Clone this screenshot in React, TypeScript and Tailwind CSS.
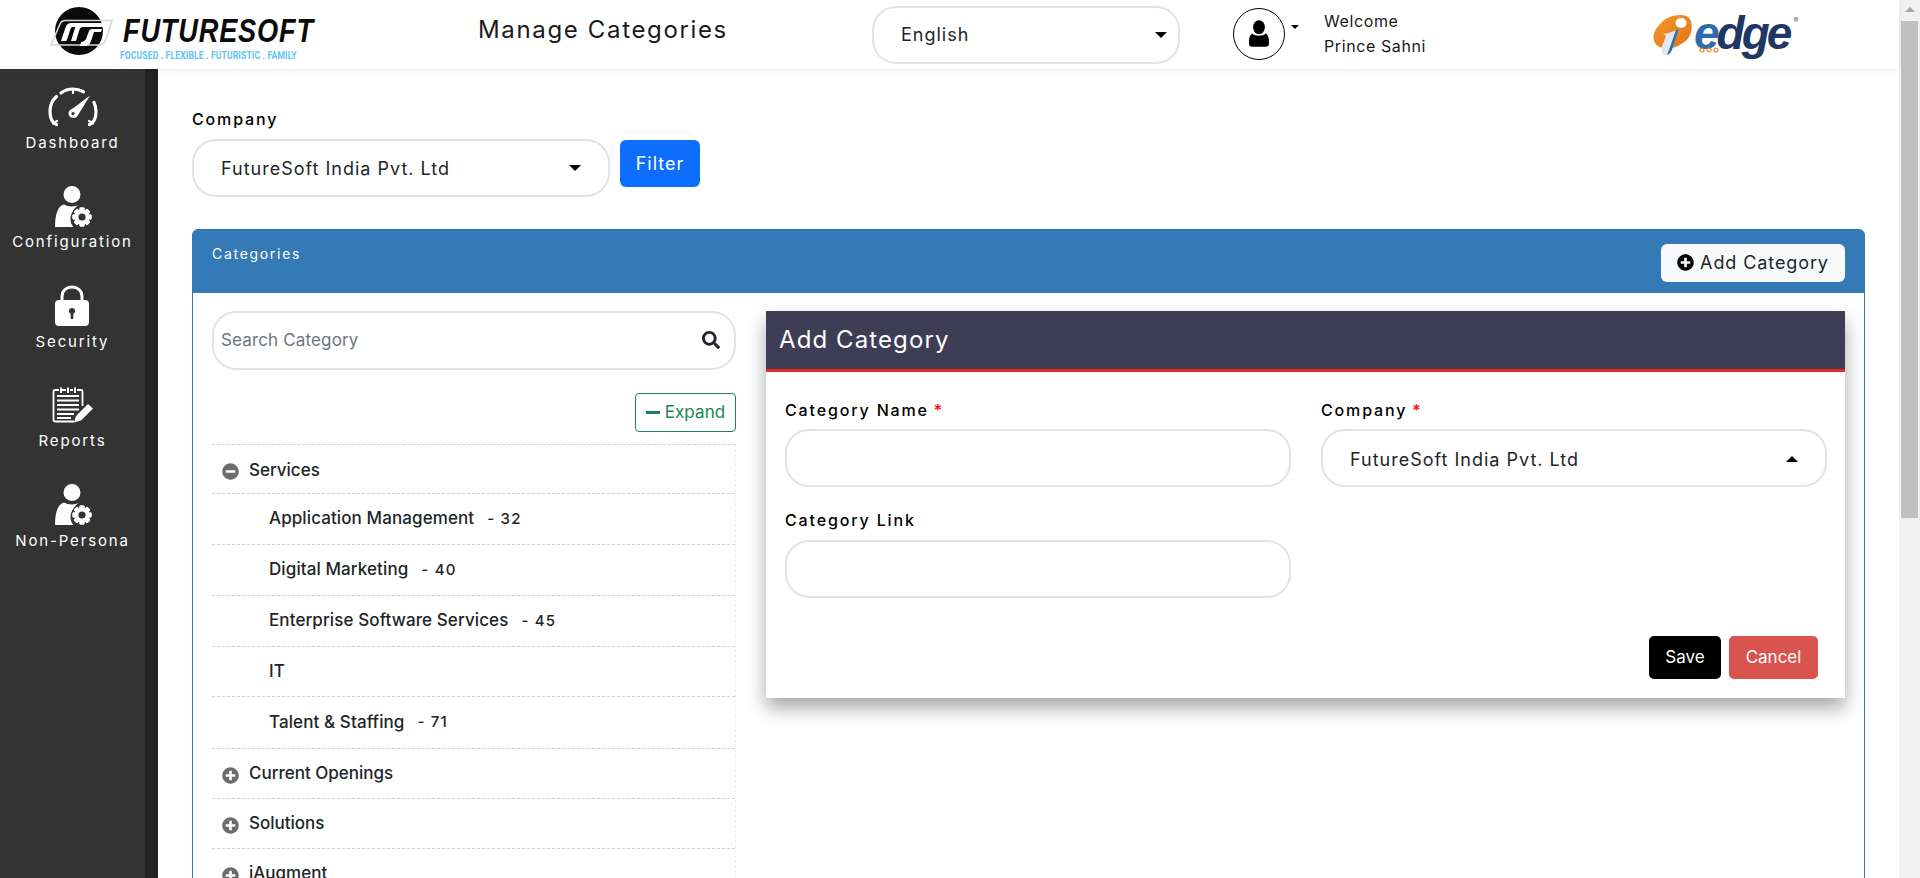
import React from "react";
import { FaPlusCircle, FaMinusCircle, FaSearch } from "react-icons/fa";

const Gauge = () => (
  <svg viewBox="0 0 50 40" className="w-[50px] h-[40px]" fill="none" stroke="#fff" strokeWidth="3.200" strokeLinecap="round">
    <path d="M8.500 37.500 C4 35.500 2 30 2 24.500 C2 18.500 4.500 13 8.500 9.500" />
    <path d="M41.500 37.500 C46 35.500 48 30 48 24.500 C48 21 47.300 18 46 15.500" />
    <path d="M13 6 C16.500 3.200 20.500 2 25 2 C29 2 32.500 3 35.500 4.800" />
    <path d="M25 2 V6" strokeWidth="2.200" />
    <path d="M5 36.500 L9 34" strokeWidth="2.200" />
    <path d="M45 36.500 L41 34" strokeWidth="2.200" />
    <path d="M42 8.500 L29.500 29 C27 32.500 20.500 31 20.500 26.500 C20.500 23.500 23.500 22 25.500 21 Z" fill="#fff" stroke="none" />
    <circle cx="25" cy="26.500" r="1.600" fill="#333" stroke="none" />
  </svg>
);

const Lock = () => (
  <svg viewBox="0 0 34 41" className="w-[34px] h-[41px]">
    <path d="M7 18 V11.500 C7 5.500 11.500 2 17 2 C22.500 2 27 5.500 27 11.500 V18" fill="none" stroke="#fff" strokeWidth="3" />
    <rect x="0" y="15" width="34" height="26" rx="4" fill="#fff" />
    <circle cx="17" cy="26" r="3" fill="#333" />
    <rect x="15.700" y="27" width="2.600" height="7" fill="#333" />
  </svg>
);

const ReportIcon = () => (
  <svg viewBox="0 0 42 37" className="w-[42px] h-[37px]" fill="none" stroke="#fff" strokeWidth="1.800">
    <path d="M7 3 H3 a1.500 1.500 0 0 0 -1.500 1.500 V33 a1.500 1.500 0 0 0 1.500 1.500 H22" />
    <path d="M25 3 H29 a1.500 1.500 0 0 1 1.500 1.500 V19" />
    <path d="M9 0.500 V6 M16 0.500 V6 M23 0.500 V6" strokeWidth="2" />
    <path d="M10 3 H14 M18 3 H21" />
    <path d="M5 9 H27 M5 13.500 H27 M5 18 H27 M5 22.500 H27 M5 27 H22 M5 31 H19" strokeWidth="2.200" />
    <path d="M22 35.500 L24 29 L36 17 L41 21.500 L29 33.500 Z" fill="#fff" stroke="none" />
  </svg>
);

const PersonGear = () => {
  const teeth = [0, 45, 90, 135, 180, 225, 270, 315];
  return (
    <svg viewBox="0 0 38 41" className="w-[38px] h-[41px] ml-[2px]">
      <circle cx="17" cy="8.500" r="8.500" fill="#fff" />
      <path d="M0 41 C0 28 3 20 9 18.500 C13 21 20 21 24 18.800 C19 22 15.500 28 15.500 33 C15.500 36 16.500 39 18.500 41 Z" fill="#fff" />
      <g fill="#fff">
        {teeth.map((a) => (
          <rect key={a} x="24.500" y="21.500" width="5" height="19" rx="1" transform={`rotate(${a} 27 31)`} />
        ))}
      </g>
      <circle cx="27" cy="31" r="7.500" fill="#fff" />
      <circle cx="27" cy="31" r="3.600" fill="#333" />
    </svg>
  );
};

const AvatarIcon = () => (
  <svg viewBox="0 0 24 32" className="w-[20px] h-[31px]" fill="#000">
    <ellipse cx="12" cy="8.500" rx="7" ry="8.500" />
    <path d="M4 16 C0.500 18 0 22 0 28 C0 30.500 1.500 32 4 32 H20 C22.500 32 24 30.500 24 28 C24 22 23.500 18 20 16 C17 19.500 7 19.500 4 16 Z" />
  </svg>
);

const FutureLogo = () => (
  <div className="flex flex-col w-[266px] -mt-[1px]">
    <div className="flex items-center h-[50px]">
      <svg viewBox="0 0 70 50" className="w-[70px] h-[50px] shrink-0">
        <circle cx="29" cy="25" r="24" fill="#0b0b0b" />
        <path d="M1 39 L10 18 C11 15.500 13 14.500 15.500 14.500 H62 L56 33 C55 37 52 39 48 39 Z" fill="none" stroke="#d8d8d8" strokeWidth="1.600" />
        <path d="M11 35 L16 20 C17 18 19 17 21 17 H55 L53.500 21 H33 C31 21 30 22 29.500 23.500 L26 35 H21 L25 22 C25.500 21 25 21 24 21 H23 C21.500 21 21 21.500 20.500 23 L16.500 35 Z" fill="#fff" />
        <path d="M31 36 C33 36 35 35 36 33 L39 25 C39.500 24 40.500 23 42 23 H52 L51 26 H44 L41 35 C40 38 38 40 34 40 H30 Z" fill="#fff" />
      </svg>
      <span className="ml-[3px] inline-block origin-left scale-x-[0.8] text-[34px] leading-none font-black italic text-[#0b0b0b] tracking-[1px] font-['Liberation_Sans',sans-serif] whitespace-nowrap -mt-[2px]">FUTURESOFT</span>
    </div>
    <div className="pl-[70px] -mt-[6px] origin-[70px_50%] scale-x-[0.85] text-[10px] leading-[12px] font-bold text-[#5cc4f5] tracking-[0.2px] whitespace-nowrap font-['Roboto',sans-serif]">FOCUSED . FLEXIBLE . FUTURISTIC . FAMILY</div>
  </div>
);

const EdgeLogo = () => (
  <div className="flex items-center h-[46px] w-[140px]">
    <svg viewBox="0 0 40 42" className="w-[40px] h-[42px] shrink-0">
      <defs>
        <linearGradient id="org" x1="0" y1="0" x2="1" y2="1">
          <stop offset="0" stopColor="#f29a2e" />
          <stop offset="1" stopColor="#e8710f" />
        </linearGradient>
      </defs>
      <path d="M9 8 C15 1 33 -2 37 5 C41 13 38 24 30 29 C25 32 22 34 16 34 C8 35 1 32 0.500 24 C0 18 4 13 9 8 Z" fill="url(#org)" />
      <ellipse cx="28" cy="9" rx="5.500" ry="5" fill="#fff" />
      <path d="M10 20 C14 20 21 17 26 15 L20 33 C18 39 14 42 11 41 C8 40 8 36 9 32 L13 22 Z" fill="#e4e7ee" />
      <path d="M14 41 C17 40 19 37 20 33 L26 15 L23 16 L16 36 Z" fill="#2d6cb5" />
    </svg>
    <div className="relative ml-[1px] -mt-[4px] flex text-[46px] leading-none font-bold italic tracking-[-3px] font-['Liberation_Sans',sans-serif]">
      <span className="text-[#2f6cae]">e</span>
      <span className="text-[#1f3763]">dge</span>
      <svg viewBox="0 0 20 6" className="absolute left-[5px] top-[37px] w-[20px] h-[6px]">
        <circle cx="3" cy="3" r="2" fill="none" stroke="#ef7f1a" strokeWidth="1.200" />
        <circle cx="10" cy="3" r="2" fill="none" stroke="#ef7f1a" strokeWidth="1.200" />
        <circle cx="17" cy="3" r="2" fill="none" stroke="#ef7f1a" strokeWidth="1.200" />
      </svg>
    </div>
    <span className="ml-[4px] text-[7px] text-[#555] self-start mt-[4px]">®</span>
  </div>
);

const Caret = ({ up }: { up?: boolean }) => (
  <span className={up ? "w-0 h-0 border-x-[6px] border-x-transparent border-b-[6px] border-b-black" : "w-0 h-0 border-x-[6px] border-x-transparent border-t-[6px] border-t-black"} />
);

const SelectBox = ({ text, up, className }: { text: string; up?: boolean; className: string }) => (
  <div className={"h-[58px] rounded-[24px] border-2 border-[#e3e3e3] bg-white flex items-center justify-between pl-[27px] text-[18px] tracking-[1px] text-[#212529] " + className}>
    <span>{text}</span>
    <Caret up={up} />
  </div>
);

const nav = [
  { label: "Dashboard", icon: <Gauge /> },
  { label: "Configuration", icon: <PersonGear /> },
  { label: "Security", icon: <Lock /> },
  { label: "Reports", icon: <ReportIcon /> },
  { label: "Non-Persona", icon: <PersonGear /> },
];

const subItems = [
  { name: "Application Management", n: "32", h: "h-[51px]" },
  { name: "Digital Marketing", n: "40", h: "h-[51px]" },
  { name: "Enterprise Software Services", n: "45", h: "h-[51px]" },
  { name: "IT", n: "", h: "h-[50px]" },
  { name: "Talent & Staffing", n: "71", h: "h-[52px]" },
];

const TopRow = ({ name, open }: { name: string; open?: boolean }) => (
  <div className={(open ? "h-[49px] pt-[3px]" : "h-[50px]") + " shrink-0 flex items-center border-b border-dashed border-[#cfcfcf] pl-[10px]"}>
    {open ? <FaMinusCircle className="w-[17px] h-[17px] text-[#6c6c6c] mt-[1px]" /> : <FaPlusCircle className="w-[17px] h-[17px] text-[#6c6c6c] mt-[3px]" />}
    <span className="ml-[10px] text-[17px] font-medium text-[#212529]">{name}</span>
  </div>
);

const Field = ({ label, req, gap, children }: { label: string; req?: boolean; gap: string; children: React.ReactNode }) => (
  <div className="flex flex-col">
    <div className={"h-[20px] text-[16px] leading-[20px] font-medium text-black tracking-[1.850px] " + gap}>
      {label}
      {req && <span className="text-[#f00] ml-[5px]">*</span>}
    </div>
    {children}
  </div>
);

const TextInput = () => <div className="h-[58px] rounded-[24px] border-2 border-[#e3e3e3] bg-white" />;

export default function App() {
  return (
    <div className="w-[1920px] h-[878px] overflow-hidden flex bg-white font-['Inter',sans-serif]">
      <div className="w-[1899px] h-full flex flex-col">
        <header className="h-[69px] shrink-0 bg-white flex items-center shadow-[0_1px_6px_rgba(0,0,0,0.08)] relative z-10">
          <div className="ml-[50px] w-[428px] shrink-0"><FutureLogo /></div>
          <div className="w-[394px] shrink-0 text-[24px] tracking-[1.650px] text-[#1a1a1a] -mt-[10px]">Manage Categories</div>
          <SelectBox text="English" className="w-[308px] shrink-0 pr-[11px]" />
          <div className="ml-[53px] w-[52px] h-[52px] rounded-full border border-black flex items-center justify-center shrink-0 -mt-[2px]"><AvatarIcon /></div>
          <span className="ml-[6px] shrink-0 -mt-[15px] w-0 h-0 border-x-[4px] border-x-transparent border-t-[4px] border-t-black" />
          <div className="ml-[25px] w-[329px] shrink-0 text-[16px] leading-[25px] tracking-[0.600px] text-[#1a1a1a] -mt-[2px]">
            <div>Welcome</div>
            <div>Prince Sahni</div>
          </div>
          <EdgeLogo />
        </header>

        <div className="flex-1 flex min-h-0">
          <aside className="w-[158px] shrink-0 flex bg-[#232323]">
            <div className="w-[145px] bg-[#333333] flex flex-col items-center pt-[1px]">
              {nav.map((n) => (
                <div key={n.label} className="h-[99.500px] shrink-0 flex flex-col items-center justify-end pb-[17px]">
                  <div className="h-[42px] flex items-center justify-center">{n.icon}</div>
                  <div className="mt-[5px] text-[15px] leading-[20px] text-white tracking-[1.850px]">{n.label}</div>
                </div>
              ))}
            </div>
          </aside>

          <main className="flex-1 min-w-0 pl-[34px] pr-[34px] pt-[40px] overflow-hidden">
            <div className="text-[16px] leading-[20px] font-medium text-black tracking-[1.850px]">Company</div>
            <div className="mt-[10px] flex items-start">
              <SelectBox text="FutureSoft India Pvt. Ltd" className="w-[418px] pr-[27px]" />
              <button className="ml-[10px] mt-[1px] w-[80px] h-[47px] rounded-[6px] bg-[#0d6efd] text-white text-[18px] tracking-[1px]">Filter</button>
            </div>

            <section className="mt-[32px] h-[700px] border border-[#337ab7] rounded-t-[6px] flex flex-col">
              <div className="h-[63px] shrink-0 bg-[#337ab7] flex items-start justify-between px-[19px] rounded-t-[4px]">
                <div className="mt-[14px] text-[14px] leading-[20px] text-white tracking-[1.700px]">Categories</div>
                <button className="mt-[14px] w-[184px] h-[38px] rounded-[6px] bg-[#f8f9fa] flex items-center justify-center gap-[6px] text-[18px] tracking-[0.900px] text-[#212529] pb-[2px]">
                  <FaPlusCircle className="w-[17px] h-[17px] text-black" />
                  Add Category
                </button>
              </div>

              <div className="flex-1 flex px-[19px] pt-[18px] min-h-0">
                <div className="w-[524px] shrink-0 flex flex-col">
                  <div className="h-[59px] rounded-[24px] border-2 border-[#e3e3e3] flex items-center justify-between pl-[7px] pr-[14px] text-[17px] tracking-[0.150px] text-[#6c757d]">
                    <span className="pt-[1px]">Search Category</span>
                    <FaSearch className="w-[18px] h-[18px] text-[#212529] -mt-[2px]" />
                  </div>
                  <div className="flex justify-end mt-[23px]">
                    <button className="w-[101px] h-[39px] rounded-[4px] border border-[#198754] text-[#198754] flex items-center justify-center gap-[5px] text-[17px] tracking-[0.100px]">
                      <span className="w-[14px] h-[3px] bg-[#198754]" />
                      Expand
                    </button>
                  </div>
                  <div className="mt-[12px] border-t border-dashed border-[#cfcfcf] border-r border-r-[#ececec] flex flex-col flex-1">
                    <TopRow name="Services" open />
                    {subItems.map((s) => (
                      <div key={s.name} className={s.h + " shrink-0 flex items-center border-b border-dashed border-[#cfcfcf] pl-[57px] text-[17px] tracking-[0.100px] font-medium text-[#212529]"}>
                        <span>{s.name}</span>
                        {s.n && <span className="ml-[13px] text-[15px] tracking-[1.200px]">- {s.n}</span>}
                      </div>
                    ))}
                    <TopRow name="Current Openings" />
                    <TopRow name="Solutions" />
                    <TopRow name="iAugment" />
                  </div>
                </div>

                <div className="ml-[30px] w-[1079px] h-[387px] bg-white shadow-[0_10px_18px_rgba(0,0,0,0.35)] relative z-10 flex flex-col">
                  <div className="h-[61px] shrink-0 bg-[#3f3d56] border-b-[3px] border-[#e02b27] flex items-center pl-[13px] text-[24px] text-white tracking-[1.100px]">Add Category</div>
                  <div className="flex-1 pl-[19px] pr-[18px] pt-[28px] flex flex-col">
                    <div className="grid grid-cols-2 gap-x-[30px] gap-y-[23px]">
                      <Field label="Category Name" req gap="mb-[9px]"><TextInput /></Field>
                      <Field label="Company" req gap="mb-[9px]"><SelectBox text="FutureSoft India Pvt. Ltd" up className="pr-[27px] pt-[2px]" /></Field>
                      <Field label="Category Link" gap="mb-[10px]"><TextInput /></Field>
                    </div>
                    <div className="flex justify-end gap-[8px] mt-[38px] pr-[9px]">
                      <button className="w-[72px] h-[43px] rounded-[5px] bg-black text-white text-[17px]">Save</button>
                      <button className="w-[89px] h-[43px] rounded-[5px] bg-[#d9534f] text-white text-[17px]">Cancel</button>
                    </div>
                  </div>
                </div>
              </div>
            </section>
          </main>
        </div>
      </div>

      <div className="w-[21px] h-full shrink-0 bg-[#f1f1f1] flex flex-col items-center">
        <div className="h-[18px] shrink-0 flex items-center justify-center">
          <span className="w-0 h-0 border-x-[5px] border-x-transparent border-b-[5px] border-b-[#a3a3a3]" />
        </div>
        <div className="h-[497px] w-[17px] bg-[#c1c1c1] shrink-0 mt-[3px]" />
      </div>
    </div>
  );
}
